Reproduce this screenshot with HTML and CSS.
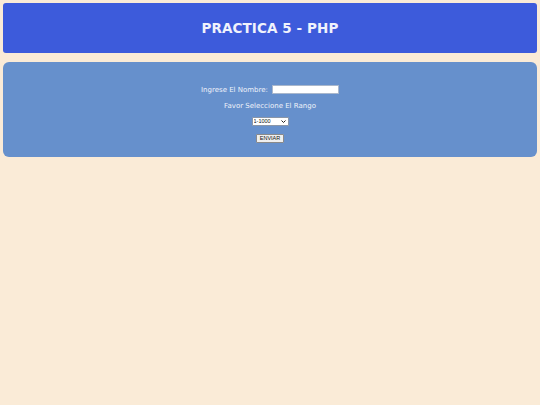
FILE: index.html
```html
<!DOCTYPE html>
<html lang="es">
<head>
  <meta charset="UTF-8">
  <title>Practica 5 - PHP</title>
  <link rel="stylesheet" href="styles.css">
</head>
<body>
  <header class="header">
    <h1 class="header-title">PRACTICA 5 - PHP</h1>
  </header>
  <main class="panel">
    <form class="form" action="#" method="post">
      <div class="form-row">
        <label for="nombre">Ingrese El Nombre:</label>
        <input type="text" id="nombre" name="nombre" class="form-input">
      </div>
      <div class="form-row">Favor Seleccione El Rango</div>
      <div class="form-row">
        <span class="select-wrap">
          <select name="rango" class="form-select">
            <option>1-1000</option>
            <option>1-100</option>
            <option>1-10</option>
          </select>
          <svg class="select-arrow" width="5" height="3" viewBox="0 0 5 3"><path d="M0.5 0.5 L2.5 2.5 L4.5 0.5" fill="none" stroke="#222" stroke-width="1"/></svg>
        </span>
      </div>
      <div class="form-row">
        <button type="submit" class="form-btn">ENVIAR</button>
      </div>
    </form>
  </main>
</body>
</html>
```

FILE: styles.css
```css
html, body {
  margin: 0;
  padding: 0;
}
body {
  background: #faebd7;
  padding: 3px;
  font-family: 'DejaVu Sans', Verdana, sans-serif;
  color: #eef2fa;
}
.header {
  height: 50px;
  background: #3d5bdb;
  border-radius: 3px;
  display: flex;
  align-items: center;
  justify-content: center;
}
.header-title {
  margin: 0;
  font-size: 13.5px;
  font-weight: 700;
  color: #f0f2fc;
  letter-spacing: 0.1px;
}

.panel {
  margin-top: 9px;
  height: 95px;
  background: #6690cc;
  border-radius: 6px;
  box-sizing: border-box;
  padding-top: 22px;
}
.form {
  display: flex;
  flex-direction: column;
  align-items: center;
  gap: 5px;
  font-size: 7px;
}
.form-row {
  display: flex;
  align-items: center;
  gap: 4px;
  height: 11px;
}
.form-input {
  width: 67px;
  height: 9px;
  box-sizing: border-box;
  border: 1px solid #a9b7cc;
  background: #fff;
  padding: 0;
}
.select-wrap {
  position: relative;
  display: inline-block;
  height: 9px;
}
.form-select {
  appearance: none;
  -webkit-appearance: none;
  display: block;
  width: 37px;
  height: 9px;
  box-sizing: border-box;
  font-family: 'Liberation Sans', Arial, sans-serif;
  font-size: 5.5px;
  line-height: 7px;
  padding: 0 0 0 1px;
  border: 1px solid #8a96a8;
  border-radius: 1px;
  background: #fff;
  color: #111;
}
.select-arrow {
  position: absolute;
  right: 3px;
  top: 3px;
  pointer-events: none;
}
.form-btn {
  width: 28px;
  height: 9px;
  padding: 0;
  margin-top: 2px;
  font-family: 'Liberation Sans', Arial, sans-serif;
  font-size: 5.5px;
  line-height: 7px;
  color: #111;
  background: #efefef;
  border: 1px solid #8a8a8a;
  border-radius: 1px;
}
```
